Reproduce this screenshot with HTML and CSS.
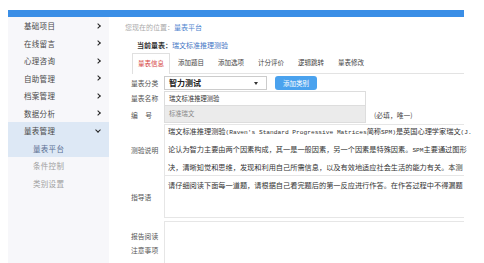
FILE: index.html
```html
<!DOCTYPE html>
<html lang="zh-CN">
<head>
  <meta charset="UTF-8">
  <title>量表平台</title>
  <link rel="stylesheet" href="styles.css">
</head>
<body>
  <div class="page">
    <div class="topbar"></div>
    <div class="layout">
      <aside class="sidebar">
        <ul class="menu">
          <li class="item">基础项目<span class="arrow"></span></li>
          <li class="item">在线留言<span class="arrow"></span></li>
          <li class="item">心理咨询<span class="arrow"></span></li>
          <li class="item">自助管理<span class="arrow"></span></li>
          <li class="item">档案管理<span class="arrow"></span></li>
          <li class="item">数据分析<span class="arrow"></span></li>
          <li class="item open">量表管理<span class="arrow down"></span></li>
          <li class="sub current">量表平台</li>
          <li class="sub">条件控制</li>
          <li class="sub">类别设置</li>
        </ul>
      </aside>

      <main class="main">
        <div class="crumb">您现在的位置：<a class="link">量表平台</a></div>
        <div class="current-scale"><b>当前量表：</b><a class="link">瑞文标准推理测验</a></div>

        <ul class="tabs">
          <li class="tab active">量表信息</li>
          <li class="tab">添加题目</li>
          <li class="tab">添加选项</li>
          <li class="tab">计分评价</li>
          <li class="tab">逻辑跳转</li>
          <li class="tab">量表修改</li>
        </ul>

        <form class="form">
          <div class="row">
            <label class="lbl">量表分类</label>
            <div class="select">智力测试<span class="caret"></span></div>
            <button type="button" class="btn">添加类别</button>
          </div>
          <div class="row">
            <label class="lbl">量表名称</label>
            <div class="input">瑞文标准推理测验</div>
          </div>
          <div class="row">
            <label class="lbl spread">编<span>号</span></label>
            <div class="input readonly">标准瑞文</div>
            <span class="note">(必填，唯一)</span>
          </div>

          <div class="row area-row">
            <label class="lbl">测验说明</label>
            <div class="area first">
              <div class="line shift">瑞文标准推理测验<span class="en">(Raven's Standard Progressive Matrices</span>简称<span class="en">SPM)</span>是英国心理学家瑞文<span class="en">(J.</span></div>
              <div class="line shift">论认为智力主要由两个因素构成，其一是一般因素，另一个因素是特殊因素。<span class="en">SPM</span>主要通过图形</div>
              <div class="line shift">决，清晰知觉和思维，发现和利用自己所需信息，以及有效地适应社会生活的能力有关。本测</div>
            </div>
          </div>
          <div class="row area-row">
            <label class="lbl">指导语</label>
            <div class="area second">
              <div class="line">请仔细阅读下面每一道题，请根据自己看完题后的第一反应进行作答。在作答过程中不得漏题</div>
            </div>
          </div>
          <div class="row area-row top">
            <label class="lbl stack">报告阅读<br>注意事项</label>
            <div class="area third"></div>
          </div>
        </form>
      </main>
    </div>
  </div>
</body>
</html>
```

FILE: styles.css
```css
html, body {
  margin: 0;
  padding: 0;
  background: #fff;
  overflow: hidden;
}
body {
  width: 484px;
  height: 263px;
  font-family: "Noto Sans CJK SC", "Liberation Sans", sans-serif;
  color: #333;
}
ul { list-style: none; margin: 0; padding: 0; }

.page {
  margin-left: 8px;
  width: 456px;
}
.topbar {
  margin-top: 10px;
  height: 7px;
  background: #3a8ee6;
}
.layout {
  display: flex;
  height: 246px;
}

/* sidebar */
.sidebar {
  width: 101px;
  height: 246px;
  background: #f7f7fa;
  flex-shrink: 0;
}
.menu li {
  height: 17.5px;
  line-height: 17.5px;
  font-size: 7.5px;
  letter-spacing: 0.3px;
  display: flex;
  align-items: center;
  justify-content: space-between;
}
.item {
  padding: 0 8px 0 16px;
  color: #4a4a4a;
}
.item.open { background: #dde8f5; }
.sub {
  padding-left: 25px;
  color: #a0a0a0;
}
.sub.current {
  background: #dde8f5;
  color: #5b6f93;
}
.arrow {
  width: 3px;
  height: 3px;
  border-right: 1.5px solid #222;
  border-bottom: 1.5px solid #222;
  transform: rotate(-45deg);
  margin-right: 1px;
}
.arrow.down {
  transform: rotate(45deg);
  margin-top: -2px;
}

/* main */
.main {
  flex: 1;
  padding-left: 16px;
  font-size: 7px;
}
.link { color: #4f86cf; }
.crumb {
  margin-top: 3px;
  height: 14px;
  line-height: 14px;
  color: #aaa;
}
.current-scale {
  margin: 4px 0 0 12px;
  height: 14px;
  line-height: 14px;
}
.current-scale b { color: #333; }
.current-scale .link { color: #3f74c4; }

.tabs {
  display: flex;
  margin: 1px 0 0 7px;
  border-bottom: 1px solid #e3e3e3;
  height: 20px;
}
.tab {
  width: 38px;
  margin-right: 2px;
  text-align: center;
  line-height: 19px;
  font-size: 6.5px;
  color: #444;
  box-sizing: border-box;
}
.tab.active {
  height: 21px;
  border: 1px solid #e0e0e0;
  border-bottom: none;
  background: #fff;
  color: #d64541;
}

/* form */
.form { margin-top: 2px; }
.row {
  display: flex;
  align-items: center;
}
.lbl {
  width: 33px;
  padding-left: 6px;
  font-size: 6.8px;
  color: #555;
  flex-shrink: 0;
}
.lbl.spread {
  display: flex;
  width: 21px;
  margin-right: 12px;
  justify-content: space-between;
}
.select {
  position: relative;
  width: 103px;
  height: 14px;
  border: 1px solid #ccc;
  box-sizing: border-box;
  padding-left: 4px;
  line-height: 12px;
  font-size: 8px;
  font-weight: bold;
  color: #222;
}
.caret {
  position: absolute;
  right: 8px;
  top: 5px;
  border-left: 2px solid transparent;
  border-right: 2px solid transparent;
  border-top: 3px solid #333;
}
.btn {
  margin-left: 8px;
  width: 42px;
  height: 14px;
  padding: 0;
  border: none;
  border-radius: 3px;
  background: #4aa2ee;
  color: #fff;
  font-family: inherit;
  font-size: 6.5px;
}
.input {
  margin-top: 1px;
  width: 202px;
  height: 15px;
  border: 1px solid #ddd;
  box-sizing: border-box;
  padding-left: 4px;
  line-height: 13px;
  font-size: 6.3px;
  color: #333;
}
.input.readonly {
  margin-top: 0;
  height: 17px;
  line-height: 15px;
  border-top: none;
  background: #ebebeb;
  color: #888;
}
.note {
  margin-left: 8px;
  font-size: 6.8px;
  color: #444;
}

.area-row.top { align-items: flex-start; margin-top: 3px; }
.lbl.stack {
  padding-top: 8px;
  line-height: 14px;
}
.area {
  width: 300px;
  box-sizing: border-box;
  border: 1px solid #e6e6e6;
  border-right: none;
  padding-left: 3px;
  font-size: 7.2px;
  color: #333;
}
.area.first {
  margin-top: 1px;
  height: 52px;
}
.area.second {
  height: 42px;
  border-top: none;
}
.area.third {
  height: 42px;
  border-bottom: none;
}
.line {
  height: 18px;
  line-height: 18px;
  white-space: nowrap;
}
.line.shift:first-child { margin-top: -3px; }
.en {
  font-family: "Liberation Mono", monospace;
  font-size: 6.2px;
}
```
